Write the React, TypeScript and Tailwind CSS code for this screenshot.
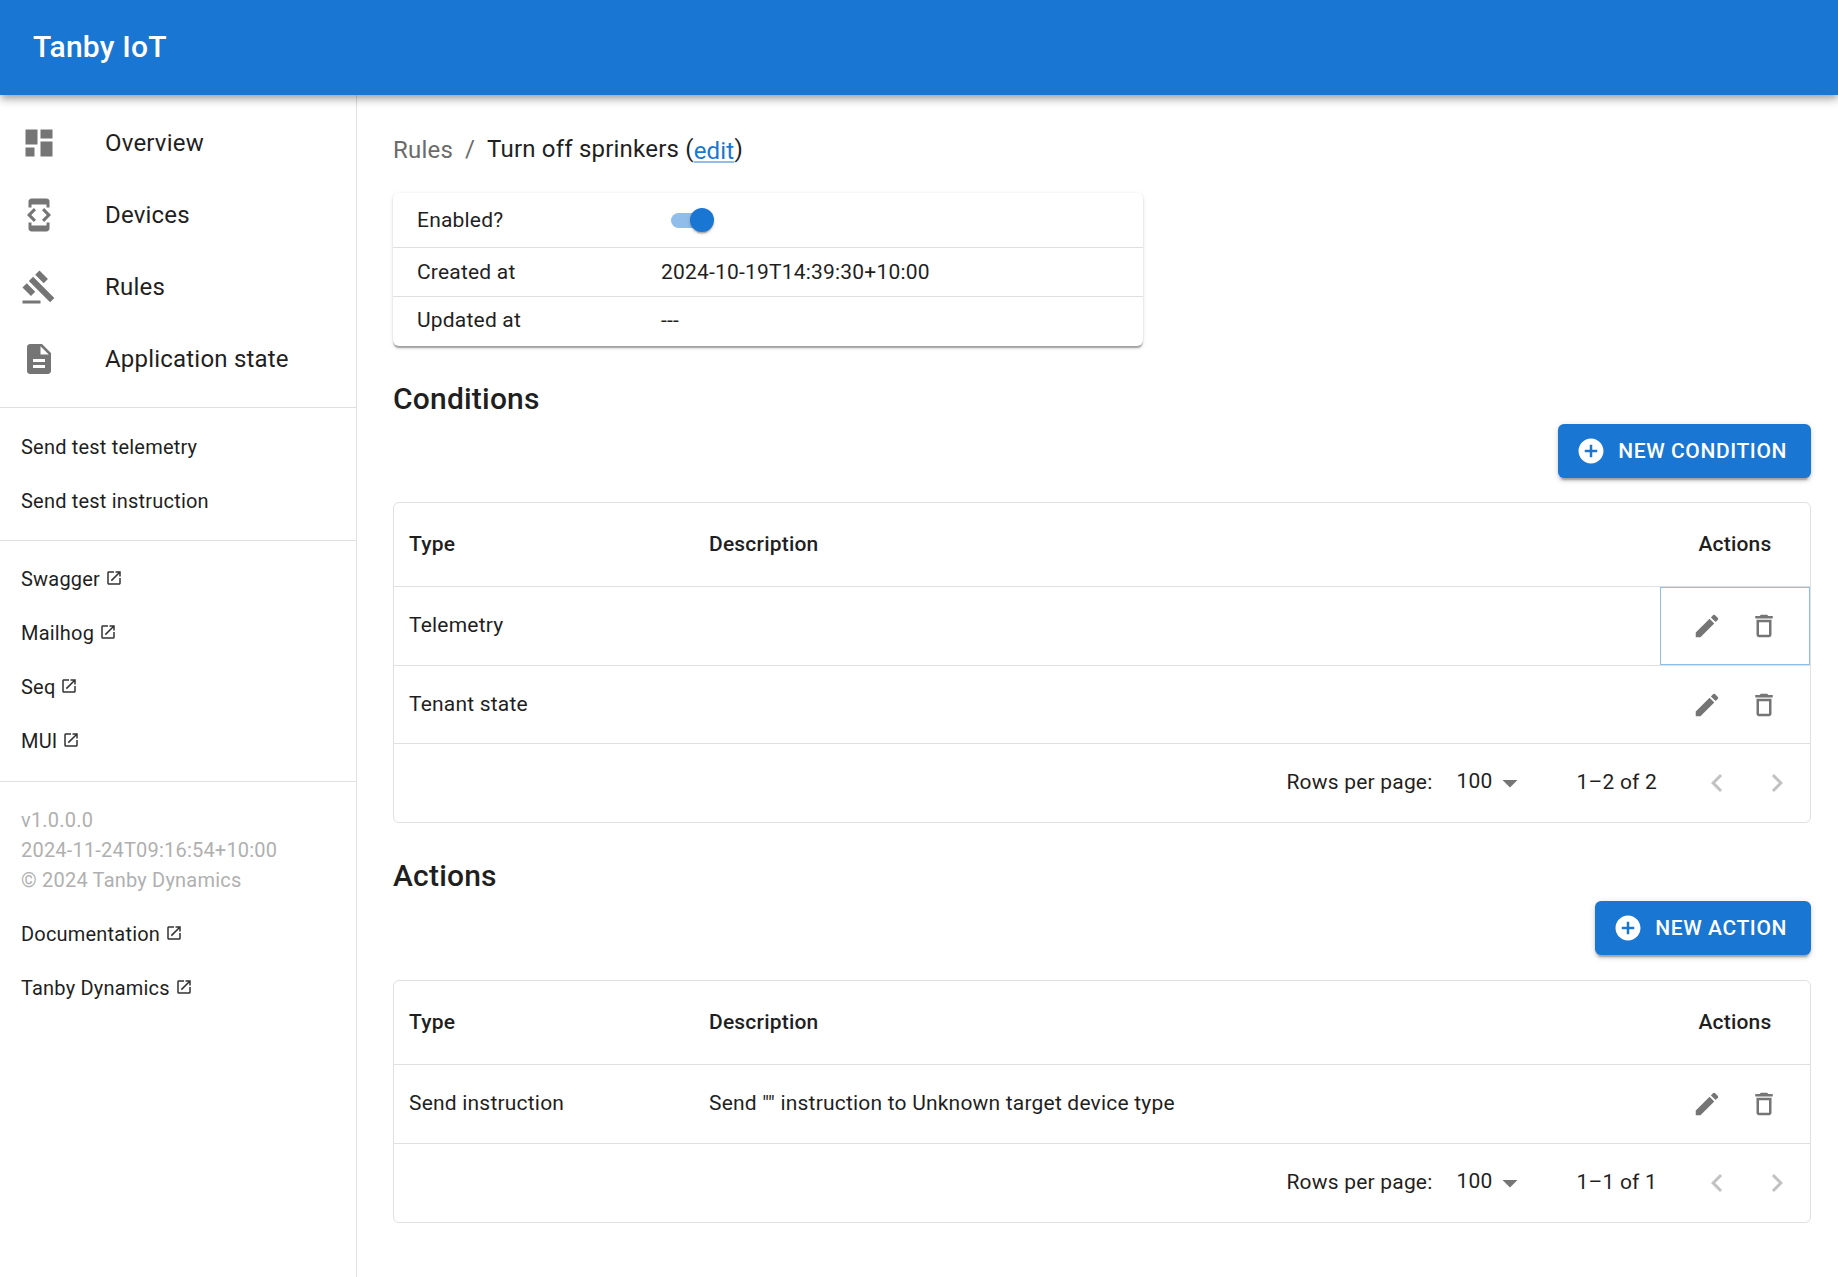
import type { ReactNode } from "react";

const ICONS = {
  dashboard: "M3 13h8V3H3zm0 8h6v-6H3zm10 0h8V11h-8zm0-18v6h8V3z",
  developer:
    "M7 5h10v2h2V3c0-1.1-.9-1.99-2-1.99L7 1c-1.1 0-2 .9-2 2v4h2zm8.41 11.59L20 12l-4.59-4.59L14 8.83 17.17 12 14 15.17zM10 15.17 6.83 12 10 8.83 8.59 7.41 4 12l4.59 4.59zM17 19H7v-2H5v4c0 1.1.9 2 2 2h10c1.1 0 2-.9 2-2v-4h-2z",
  gavel:
    "M1 21h12v2H1zM5.245 8.07l2.83-2.827 14.14 14.142-2.828 2.828zM12.317 1l5.657 5.656-2.83 2.83-5.654-5.66zM3.825 9.485l5.657 5.657-2.828 2.828-5.657-5.657z",
  description:
    "M14 2H6c-1.1 0-1.99.9-1.99 2L4 20c0 1.1.89 2 1.99 2H18c1.1 0 2-.9 2-2V8zm2 16H8v-2h8zm0-4H8v-2h8zm-3-5V3.5L18.5 9z",
  external:
    "M19 19H5V5h7V3H5c-1.11 0-2 .9-2 2v14c0 1.1.89 2 2 2h14c1.1 0 2-.9 2-2v-7h-2zM14 3v2h3.59l-9.83 9.83 1.41 1.41L19 6.41V10h2V3z",
  add: "M12 2C6.48 2 2 6.48 2 12s4.48 10 10 10 10-4.48 10-10S17.52 2 12 2m5 11h-4v4h-2v-4H7v-2h4V7h2v4h4z",
  edit: "M3 17.25V21h3.75L17.81 9.94l-3.75-3.75zM20.71 7.04c.39-.39.39-1.02 0-1.41l-2.34-2.34a.9959.9959 0 0 0-1.41 0l-1.83 1.83 3.75 3.75z",
  trash: "M6 19c0 1.1.9 2 2 2h8c1.1 0 2-.9 2-2V7H6zM8 9h8v10H8zm7.5-5-1-1h-5l-1 1H5v2h14V4z",
  dropdown: "m7 10 5 5 5-5z",
  left: "M15.41 16.59 10.83 12l4.58-4.59L14 6l-6 6 6 6z",
  right: "M8.59 16.59 13.17 12 8.59 7.41 10 6l6 6-6 6z",
};

function Icon({ name, className }: { name: keyof typeof ICONS; className: string }) {
  return (
    <svg viewBox="0 0 24 24" fill="currentColor" className={className}>
      <path d={ICONS[name]} />
    </svg>
  );
}

function NavItem({ icon, label }: { icon: keyof typeof ICONS; label: string }) {
  return (
    <div className="flex h-[72px] items-center pl-[21px]">
      <Icon name={icon} className="h-9 w-9 shrink-0 text-[#757575]" />
      <span className="ml-12 text-2xl tracking-[0.2px]">{label}</span>
    </div>
  );
}

function SideLink({ label, external }: { label: string; external?: boolean }) {
  return (
    <div className={`flex h-[54px] items-center pl-[21px] text-[20px] tracking-[0.2px] ${external ? "pb-[2px]" : ""}`}>
      <span>{label}</span>
      {external && <Icon name="external" className="mb-[3px] ml-[5px] h-[18px] w-[18px] text-[#333333]" />}
    </div>
  );
}

function Divider() {
  return <div className="h-px bg-[#e0e0e0]" />;
}

function Sidebar() {
  return (
    <aside className="w-[357px] shrink-0 border-r border-[#e0e0e0] text-[#1f1f1f]">
      <nav className="py-3">
        <NavItem icon="dashboard" label="Overview" />
        <NavItem icon="developer" label="Devices" />
        <NavItem icon="gavel" label="Rules" />
        <NavItem icon="description" label="Application state" />
      </nav>
      <Divider />
      <div className="py-3">
        <SideLink label="Send test telemetry" />
        <SideLink label="Send test instruction" />
      </div>
      <Divider />
      <div className="py-3">
        <SideLink label="Swagger" external />
        <SideLink label="Mailhog" external />
        <SideLink label="Seq" external />
        <SideLink label="MUI" external />
      </div>
      <Divider />
      <div className="pt-[23px]">
        <div className="pl-[21px] text-[20px] leading-[30px] tracking-[0.2px] text-[#b0b0b0]">
          <div>v1.0.0.0</div>
          <div>2024-11-24T09:16:54+10:00</div>
          <div>© 2024 Tanby Dynamics</div>
        </div>
        <div className="pt-[13px]">
          <SideLink label="Documentation" external />
          <SideLink label="Tanby Dynamics" external />
        </div>
      </div>
    </aside>
  );
}

function InfoRow({ label, children, className }: { label: string; children: ReactNode; className: string }) {
  return (
    <div className={`flex items-center pl-6 text-[21px] tracking-[0.2px] ${className}`}>
      <span className="w-[244px] shrink-0">{label}</span>
      {children}
    </div>
  );
}

function NewButton({ label }: { label: string }) {
  return (
    <div className="flex justify-end">
      <button className="flex h-[54px] items-center rounded-md bg-[#1976d2] pl-[18px] pr-[24px] text-[21px] font-medium uppercase tracking-[0.6px] text-white shadow-[0_4.5px_1.5px_-3px_rgba(0,0,0,0.2),0_3px_3px_0_rgba(0,0,0,0.14),0_1.5px_7.5px_0_rgba(0,0,0,0.12)]">
        <Icon name="add" className="mr-3 h-[30px] w-[30px]" />
        <span className="pt-px">{label}</span>
      </button>
    </div>
  );
}

function RowActions() {
  return (
    <div className="flex items-center justify-center gap-[27px]">
      <Icon name="edit" className="h-[30px] w-[30px] text-[#757575]" />
      <Icon name="trash" className="h-[30px] w-[30px] text-[#757575]" />
    </div>
  );
}

type Row = { type: string; description?: string; focused?: boolean; height: string };

function DataTable({ rows, range }: { rows: Row[]; range: string }) {
  return (
    <div className="rounded-md border border-[#e0e0e0] text-[21px] tracking-[0.2px]">
      <div className="flex h-[84px] items-center border-b border-[#e0e0e0] pt-px font-medium">
        <div className="w-[315px] shrink-0 pl-[15px]">Type</div>
        <div className="flex-1">Description</div>
        <div className="w-[150px] shrink-0 text-center">Actions</div>
      </div>
      {rows.map((row) => (
        <div key={row.type} className={`flex items-stretch border-b border-[#e0e0e0] ${row.height}`}>
          <div className="flex w-[315px] shrink-0 items-center pl-[15px]">{row.type}</div>
          <div className="flex flex-1 items-center">{row.description}</div>
          <div className={`flex w-[150px] shrink-0 items-center justify-center ${row.focused ? "border border-[#90bde9]" : ""}`}>
            <RowActions />
          </div>
        </div>
      ))}
      <div className="flex h-[78px] items-center justify-end">
        <span>Rows per page:</span>
        <span className="ml-[24px] pb-[2px]">100</span>
        <Icon name="dropdown" className="-ml-px h-9 w-9 text-[#757575]" />
        <span className="ml-[49px]">{range}</span>
        <div className="ml-[42px] mr-[15px] flex gap-[24px] text-[#c2c2c2]">
          <Icon name="left" className="h-9 w-9" />
          <Icon name="right" className="h-9 w-9" />
        </div>
      </div>
    </div>
  );
}

export default function App() {
  return (
    <div className="flex min-h-[1277px] flex-col bg-white font-['Roboto',sans-serif] text-[#1f1f1f]">
      <header className="relative z-10 flex h-[95px] items-center bg-[#1976d2] pb-[2px] pl-[33px] text-[30px] font-medium tracking-[0.22px] text-white shadow-[0_3px_6px_-1.5px_rgba(0,0,0,0.2),0_6px_7.5px_0_rgba(0,0,0,0.14),0_1.5px_15px_0_rgba(0,0,0,0.12)]">
        Tanby IoT
      </header>
      <div className="flex flex-1">
        <Sidebar />
        <main className="min-w-0 flex-1 pl-9 pr-[27px] pt-[36px]">
          <div className="flex h-[36px] items-center text-2xl tracking-[0.2px]">
            <span className="pt-[2px] text-[#6b6b6b]">Rules</span>
            <span className="mx-3 text-[#6b6b6b]">/</span>
            <span className="pt-px">
              Turn off sprinkers (
              <a className="align-[-2px] text-[#1976d2] underline decoration-[#90bde9] decoration-2 underline-offset-2">edit</a>)
            </span>
          </div>
          <section className="mt-[26px] w-[750px] rounded-md shadow-[0_3px_1.5px_-1.5px_rgba(0,0,0,0.2),0_1.5px_1.5px_0_rgba(0,0,0,0.14),0_1.5px_4.5px_0_rgba(0,0,0,0.12)]">
            <InfoRow label="Enabled?" className="border-b border-[#e0e0e0] pt-px">
              <div className="-mt-px flex h-[54px] items-center pl-[10px]">
                <div className="relative h-[15px] w-[41px] rounded-full bg-[#90bde9]">
                  <div className="absolute -top-[4.5px] left-[19px] h-6 w-6 rounded-full bg-[#1976d2] shadow-[0_3px_1.5px_-1.5px_rgba(0,0,0,0.2),0_1.5px_1.5px_0_rgba(0,0,0,0.14),0_1.5px_4.5px_0_rgba(0,0,0,0.12)]" />
                </div>
              </div>
            </InfoRow>
            <InfoRow label="Created at" className="h-[49px] border-b border-[#e0e0e0] pt-px">
              <div>2024-10-19T14:39:30+10:00</div>
            </InfoRow>
            <InfoRow label="Updated at" className="h-[49px] pb-px">
              <span>---</span>
            </InfoRow>
          </section>
          <h2 className="mt-[32px] h-[42px] text-[30px] font-medium leading-[42px] tracking-[0.2px]">Conditions</h2>
          <div className="mt-[4px]">
            <NewButton label="New condition" />
          </div>
          <div className="mt-6">
            <DataTable
              range="1–2 of 2"
              rows={[
                { type: "Telemetry", focused: true, height: "h-[79px]" },
                { type: "Tenant state", height: "h-[78px]" },
              ]}
            />
          </div>
          <h2 className="mt-[32px] h-[42px] text-[30px] font-medium leading-[42px] tracking-[0.2px]">Actions</h2>
          <div className="mt-[4px]">
            <NewButton label="New action" />
          </div>
          <div className="mt-[25px]">
            <DataTable
              range="1–1 of 1"
              rows={[
                { type: "Send instruction", description: 'Send "" instruction to Unknown target device type', height: "h-[79px]" },
              ]}
            />
          </div>
        </main>
      </div>
    </div>
  );
}
